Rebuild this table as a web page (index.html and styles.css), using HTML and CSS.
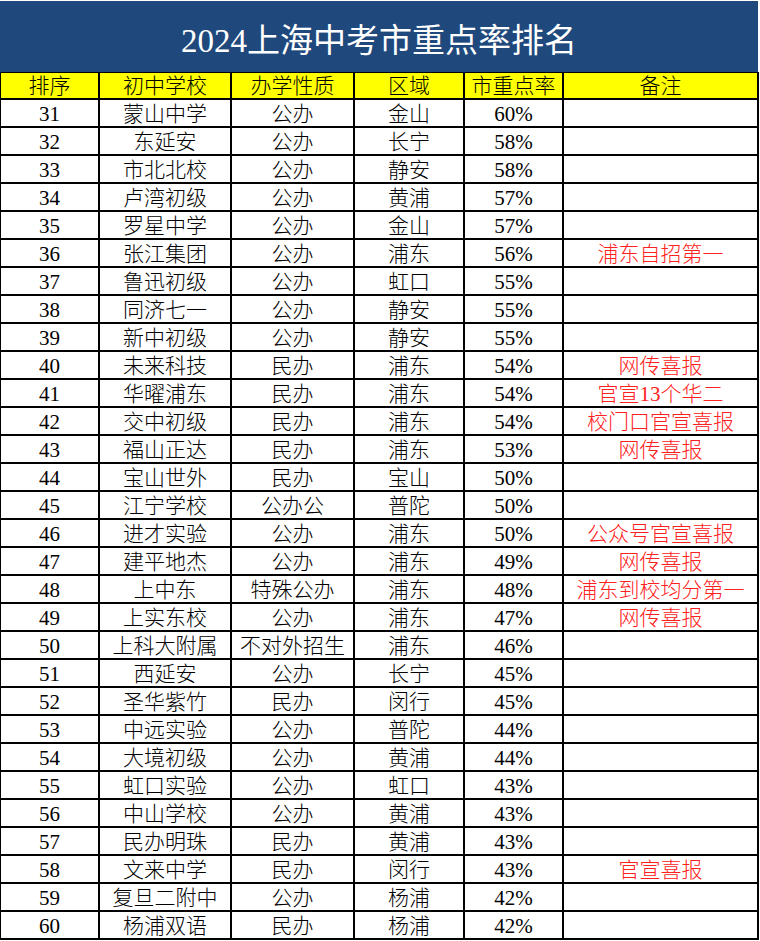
FILE: index.html
```html
<!DOCTYPE html>
<html lang="zh-CN">
<head>
<meta charset="utf-8">
<title>2024上海中考市重点率排名</title>
<link rel="stylesheet" href="styles.css">
</head>
<body>
<div class="sheet">
  <div class="title">2024上海中考市重点率排名</div>
  <div class="grid">
    <div class="cell head first">排序</div><div class="cell head">初中学校</div><div class="cell head">办学性质</div><div class="cell head">区域</div><div class="cell head">市重点率</div><div class="cell head">备注</div>

    <div class="cell first">31</div><div class="cell">蒙山中学</div><div class="cell">公办</div><div class="cell">金山</div><div class="cell">60%</div><div class="cell note"></div>
    <div class="cell first">32</div><div class="cell">东延安</div><div class="cell">公办</div><div class="cell">长宁</div><div class="cell">58%</div><div class="cell note"></div>
    <div class="cell first">33</div><div class="cell">市北北校</div><div class="cell">公办</div><div class="cell">静安</div><div class="cell">58%</div><div class="cell note"></div>
    <div class="cell first">34</div><div class="cell">卢湾初级</div><div class="cell">公办</div><div class="cell">黄浦</div><div class="cell">57%</div><div class="cell note"></div>
    <div class="cell first">35</div><div class="cell">罗星中学</div><div class="cell">公办</div><div class="cell">金山</div><div class="cell">57%</div><div class="cell note"></div>
    <div class="cell first">36</div><div class="cell">张江集团</div><div class="cell">公办</div><div class="cell">浦东</div><div class="cell">56%</div><div class="cell note">浦东自招第一</div>
    <div class="cell first">37</div><div class="cell">鲁迅初级</div><div class="cell">公办</div><div class="cell">虹口</div><div class="cell">55%</div><div class="cell note"></div>
    <div class="cell first">38</div><div class="cell">同济七一</div><div class="cell">公办</div><div class="cell">静安</div><div class="cell">55%</div><div class="cell note"></div>
    <div class="cell first">39</div><div class="cell">新中初级</div><div class="cell">公办</div><div class="cell">静安</div><div class="cell">55%</div><div class="cell note"></div>
    <div class="cell first">40</div><div class="cell">未来科技</div><div class="cell">民办</div><div class="cell">浦东</div><div class="cell">54%</div><div class="cell note">网传喜报</div>
    <div class="cell first">41</div><div class="cell">华曜浦东</div><div class="cell">民办</div><div class="cell">浦东</div><div class="cell">54%</div><div class="cell note">官宣13个华二</div>
    <div class="cell first">42</div><div class="cell">交中初级</div><div class="cell">民办</div><div class="cell">浦东</div><div class="cell">54%</div><div class="cell note">校门口官宣喜报</div>
    <div class="cell first">43</div><div class="cell">福山正达</div><div class="cell">民办</div><div class="cell">浦东</div><div class="cell">53%</div><div class="cell note">网传喜报</div>
    <div class="cell first">44</div><div class="cell">宝山世外</div><div class="cell">民办</div><div class="cell">宝山</div><div class="cell">50%</div><div class="cell note"></div>
    <div class="cell first">45</div><div class="cell">江宁学校</div><div class="cell">公办公</div><div class="cell">普陀</div><div class="cell">50%</div><div class="cell note"></div>
    <div class="cell first">46</div><div class="cell">进才实验</div><div class="cell">公办</div><div class="cell">浦东</div><div class="cell">50%</div><div class="cell note">公众号官宣喜报</div>
    <div class="cell first">47</div><div class="cell">建平地杰</div><div class="cell">公办</div><div class="cell">浦东</div><div class="cell">49%</div><div class="cell note">网传喜报</div>
    <div class="cell first">48</div><div class="cell">上中东</div><div class="cell">特殊公办</div><div class="cell">浦东</div><div class="cell">48%</div><div class="cell note">浦东到校均分第一</div>
    <div class="cell first">49</div><div class="cell">上实东校</div><div class="cell">公办</div><div class="cell">浦东</div><div class="cell">47%</div><div class="cell note">网传喜报</div>
    <div class="cell first">50</div><div class="cell">上科大附属</div><div class="cell">不对外招生</div><div class="cell">浦东</div><div class="cell">46%</div><div class="cell note"></div>
    <div class="cell first">51</div><div class="cell">西延安</div><div class="cell">公办</div><div class="cell">长宁</div><div class="cell">45%</div><div class="cell note"></div>
    <div class="cell first">52</div><div class="cell">圣华紫竹</div><div class="cell">民办</div><div class="cell">闵行</div><div class="cell">45%</div><div class="cell note"></div>
    <div class="cell first">53</div><div class="cell">中远实验</div><div class="cell">公办</div><div class="cell">普陀</div><div class="cell">44%</div><div class="cell note"></div>
    <div class="cell first">54</div><div class="cell">大境初级</div><div class="cell">公办</div><div class="cell">黄浦</div><div class="cell">44%</div><div class="cell note"></div>
    <div class="cell first">55</div><div class="cell">虹口实验</div><div class="cell">公办</div><div class="cell">虹口</div><div class="cell">43%</div><div class="cell note"></div>
    <div class="cell first">56</div><div class="cell">中山学校</div><div class="cell">公办</div><div class="cell">黄浦</div><div class="cell">43%</div><div class="cell note"></div>
    <div class="cell first">57</div><div class="cell">民办明珠</div><div class="cell">民办</div><div class="cell">黄浦</div><div class="cell">43%</div><div class="cell note"></div>
    <div class="cell first">58</div><div class="cell">文来中学</div><div class="cell">民办</div><div class="cell">闵行</div><div class="cell">43%</div><div class="cell note">官宣喜报</div>
    <div class="cell first">59</div><div class="cell">复旦二附中</div><div class="cell">公办</div><div class="cell">杨浦</div><div class="cell">42%</div><div class="cell note"></div>
    <div class="cell first">60</div><div class="cell">杨浦双语</div><div class="cell">民办</div><div class="cell">杨浦</div><div class="cell">42%</div><div class="cell note"></div>
  </div>
</div>
</body>
</html>
```

FILE: styles.css
```css
* {
  box-sizing: border-box;
}

html, body {
  margin: 0;
  padding: 0;
  background: #ffffff;
}

.sheet {
  width: 759px;
  font-family: "Liberation Serif", "Noto Sans CJK SC", serif;
  font-size: 21px;
  font-weight: 300;
  color: #000000;
}

.title {
  margin-top: 1px;
  width: 758px;
  height: 71px;
  background: #1f497d;
  color: #ffffff;
  font-size: 33px;
  font-weight: 400;
  display: flex;
  align-items: center;
  justify-content: center;
  padding-top: 2px;
}

.grid {
  display: grid;
  grid-template-columns: 100px 132px 123px 110px 99px 195px;
}

.cell {
  height: 28px;
  padding-top: 3px;
  border-right: 2px solid #000000;
  border-bottom: 2px solid #000000;
  display: flex;
  align-items: center;
  justify-content: center;
  white-space: nowrap;
  line-height: 1;
}

.cell.first {
  border-left: 1px solid #000000;
}

.cell.head {
  background: #ffff00;
  border-top: 1px solid #000000;
  padding-top: 2px;
}

.cell.note {
  color: #ff2020;
}
```
